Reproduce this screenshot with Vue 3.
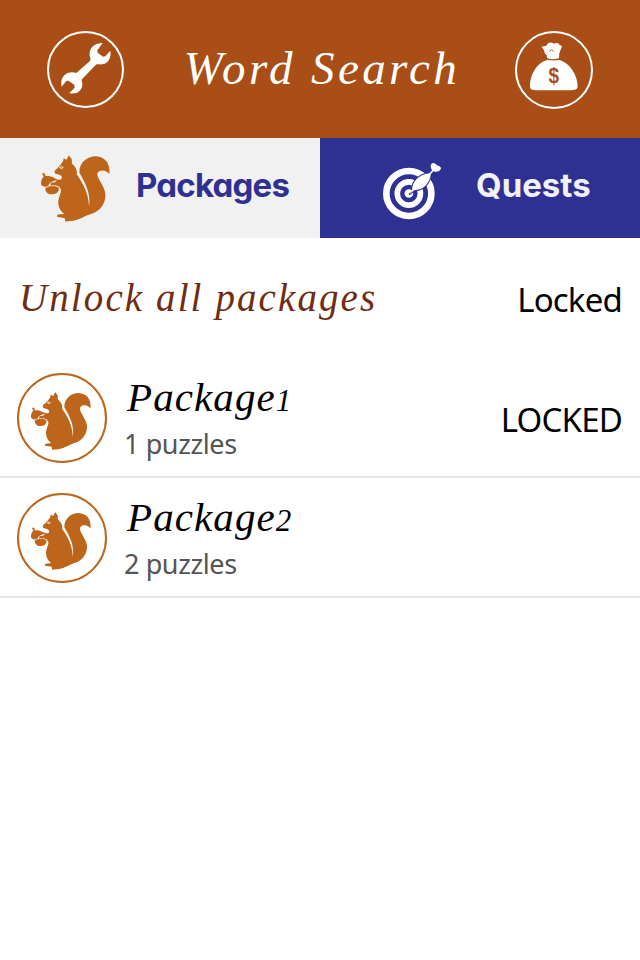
<script setup>
import { ref } from "vue";

const tab = ref("packages");

const packages = [
  { name: "Package", number: 1, puzzles: 1, status: "LOCKED" },
  { name: "Package", number: 2, puzzles: 2, status: "" },
];
</script>

<template>
  <div class="app">
    <!-- squirrel shape, shared by the tab and the list -->
    <svg class="defs" width="0" height="0">
      <symbol id="squirrel" viewBox="33 29 208 201">
        <path d="M92 58L100 46L101 38L110 43L117 29L126 42L126 54C138 64 143 76 141 87C158 111 176 141 178 184C183 142 167 114 149 83C146 56 168 32 199 32C227 34 243 55 239 86C229 73 211 72 204 82C198 97 224 119 227 145C229 174 212 195 190 204C165 211 151 223 130 227L106 229L105 219L81 215L83 208L103 206C86 194 82 174 87 158C90 145 96 142 92 130C88 121 76 118 61 121L63 112L75 111L81 105L73 103L76 99C86 105 95 104 96 97C97 90 87 86 76 85C72 79 74 74 81 70Z" />
        <path d="M36 84L43 83L47 92C63 91 77 98 80 105C69 107 58 112 55 122C46 126 35 124 33 116C33 104 36 98 41 94Z" />
        <path d="M46 128C58 120 80 119 87 128C87 144 76 148 58 147C50 143 45 136 46 128Z" />
        <path class="eye" d="M88 67Q94 60 100 66Q96 71 91 68" />
      </symbol>
    </svg>

    <header class="header">
      <button class="round">
        <svg class="wrench" viewBox="62 68 150 153">
          <path d="M187 68C163 68 146 82 148 106C150 113 152 118 149 122L108 158C98 155 84 154 73 164C63 173 61 185 64 199L78 182L84 181L102 193L103 202L87 218C105 224 126 214 126 192C127 186 122 182 125 177L166 134C171 130 180 134 190 131C206 126 213 110 210 91L195 108L188 109L172 97L171 90Z" />
        </svg>
      </button>
      <h1 class="title">Word Search</h1>
      <button class="round coins">
        <svg class="bag" viewBox="75 67 145 146">
          <path d="M75 200C75 165 96 127 128 120Q146 123 163 120C195 128 219 166 219 200C219 210 210 212 195 212H99C81 212 75 210 75 200Z" />
          <path d="M110 81C115 77 120 81 126 76C130 65 140 67 147 71C155 67 162 68 165 76L171 77C173 83 161 95 163 114Q145 121 127 115C125 111 128 104 122 103C117 96 119 89 110 81Z" />
          <path class="crease" d="M134 94L140 89L146 95" />
          <text x="147" y="190" text-anchor="middle" textLength="32" lengthAdjust="spacingAndGlyphs">$</text>
        </svg>
      </button>
    </header>

    <nav class="tabs">
      <button class="tab packages" @click="tab = 'packages'">
        <svg class="squirrel"><use href="#squirrel" /></svg>
        <span>Packages</span>
      </button>
      <button class="tab quests" @click="tab = 'quests'">
        <svg class="target" viewBox="39 49 175 176">
          <circle class="ring" cx="117" cy="146" r="68" stroke-width="20" />
          <circle class="ring" cx="117" cy="146" r="35" stroke-width="17" />
          <circle class="dot" cx="117" cy="146" r="13" />
          <path class="dart" d="M127 135C126 110 149 88 179 85L187 76C178 61 186 49 197 56C203 64 212 60 214 70C212 80 199 83 191 79L183 88C181 114 161 136 133 136L118 149" />
        </svg>
        <span>Quests</span>
      </button>
    </nav>

    <main>
      <section class="row unlock">
        <h2>Unlock all packages</h2>
        <span class="status">Locked</span>
      </section>

      <section v-for="item in packages" :key="item.number" class="row item">
        <div class="avatar">
          <svg class="squirrel"><use href="#squirrel" /></svg>
        </div>
        <div class="info">
          <h3>{{ item.name }}<span class="digit">{{ item.number }}</span></h3>
          <p>{{ item.puzzles }} puzzles</p>
        </div>
        <span class="status">{{ item.status }}</span>
      </section>
    </main>
  </div>
</template>

<style>
body {
  background: #fff;
}
</style>

<style scoped>
.app {
  width: 640px;
  height: 960px;
  overflow: hidden;
  background: #fff;
  font-family: "Noto Sans", sans-serif;
}

.defs {
  display: block;
}

button {
  margin: 0;
  padding: 0;
  border: none;
  background: none;
}

h1,
h2,
h3,
p {
  margin: 0;
  font-weight: normal;
  white-space: nowrap;
}

h1,
h2,
h3 {
  font-family: "Liberation Serif", serif;
  font-style: italic;
}

/* Header */
.header {
  display: flex;
  justify-content: space-between;
  align-items: center;
  box-sizing: border-box;
  height: 138px;
  padding: 1px 47px 0;
  background: #a84e16;
}

.round {
  display: flex;
  justify-content: center;
  align-items: center;
  box-sizing: border-box;
  width: 77px;
  height: 77px;
  border: 2px solid #fff;
  border-radius: 50%;
}

.round path {
  fill: #fff;
}

.coins {
  width: 78px;
  height: 78px;
  padding-bottom: 6px;
}

.wrench {
  width: 50px;
  height: 51px;
  margin-bottom: 2px;
}

.bag {
  width: 48px;
  height: 49px;
}

.round .crease {
  fill: none;
  stroke: #a84e16;
  stroke-width: 3;
}

.bag text {
  font: bold 66px "Liberation Sans", sans-serif;
  fill: #a84e16;
}

.title {
  padding: 0 0 3px 5px;
  color: #fff;
  font-size: 47px;
  letter-spacing: 3.4px;
}

/* Tabs */
.tabs {
  display: flex;
  height: 100px;
}

.tab {
  display: flex;
  align-items: center;
  box-sizing: border-box;
  width: 320px;
  font-family: Inter, sans-serif;
  font-size: 33px;
  font-weight: 700;
  font-feature-settings: "cv11";
}

.packages {
  gap: 26px;
  padding-left: 41px;
  background: #f1f1f1;
  color: #2e3192;
  letter-spacing: -0.8px;
}

.quests {
  gap: 35px;
  padding-left: 63px;
  background: #2e3092;
  color: #f1f1fa;
}

.tab span {
  padding-bottom: 6px;
}

.squirrel {
  width: 69px;
  height: 67px;
  fill: #bd651b;
}

.eye {
  fill: none;
  stroke: #fff;
  stroke-width: 2.5;
}

.target {
  width: 58px;
  height: 59px;
  margin-top: 5px;
}

.ring {
  fill: none;
  stroke: #fff;
}

.dot {
  fill: #fff;
}

.dart {
  fill: #fff;
  stroke: #2e3092;
  stroke-width: 6;
  paint-order: stroke;
}

/* List */
.row {
  display: flex;
  align-items: center;
  box-sizing: border-box;
  height: 120px;
  padding: 0 18px 0 17px;
}

.status {
  margin-left: auto;
  padding-top: 2px;
  color: #000;
  font-size: 33px;
  letter-spacing: -0.8px;
}

.unlock h2 {
  padding: 0 0 2px 2px;
  color: #702d12;
  font-size: 39px;
  letter-spacing: 2.1px;
}

.item {
  padding-top: 2px;
  border-bottom: 2px solid #e5e5e5;
}

.avatar {
  display: flex;
  justify-content: center;
  align-items: center;
  box-sizing: border-box;
  width: 90px;
  height: 90px;
  padding: 5px 2px 0 0;
  border: 2px solid #bd651b;
  border-radius: 50%;
}

.avatar .squirrel {
  width: 60px;
  height: 58px;
}

.info {
  margin-left: 17px;
  padding-top: 2px;
}

.info h3 {
  padding-left: 3px;
  color: #000;
  font-size: 41px;
  line-height: 46px;
  letter-spacing: 1.1px;
}

.digit {
  font-size: 31px;
}

.info p {
  color: #555;
  font-size: 27px;
  line-height: 40px;
  letter-spacing: -0.4px;
}
</style>
